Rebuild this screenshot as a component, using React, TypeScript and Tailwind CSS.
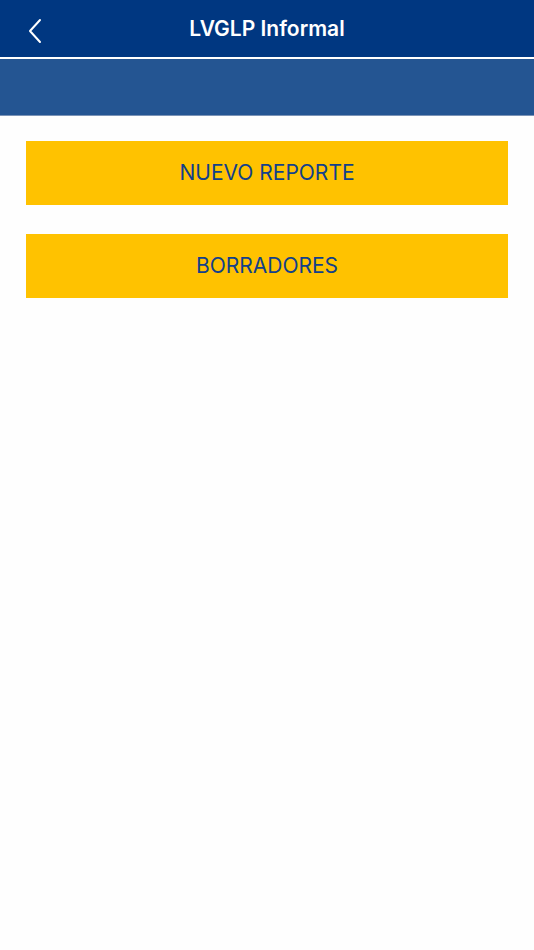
export default function App() {
  return (
    <div className="min-h-[950px] bg-[#fefefe]" style={{ fontFamily: 'Inter, "Liberation Sans", sans-serif' }}>
      <header className="relative flex h-[57px] items-center justify-center bg-[#003781]">
        <button className="absolute left-[24px] top-[14px] p-1" aria-label="Atrás">
          <svg width="14" height="26" viewBox="0 0 14 26" fill="none">
            <path d="M12 2L2 13l10 11" stroke="white" strokeWidth="2" strokeLinecap="round" strokeLinejoin="round" />
          </svg>
        </button>
        <h1 className="text-[21px] font-semibold text-white">LVGLP Informal</h1>
      </header>
      <div className="h-[2px] bg-white" />
      <div className="h-[57px] border-b border-[#7b93b6] bg-[#245592]" />
      <main className="flex flex-col gap-[29px] px-[26px] pt-[25px]">
        <button className="flex h-[64px] items-center justify-center bg-[#ffc200] text-[21px] text-[#12408a]">
          NUEVO REPORTE
        </button>
        <button className="flex h-[64px] items-center justify-center bg-[#ffc200] text-[21px] text-[#12408a]">
          BORRADORES
        </button>
      </main>
    </div>
  );
}
